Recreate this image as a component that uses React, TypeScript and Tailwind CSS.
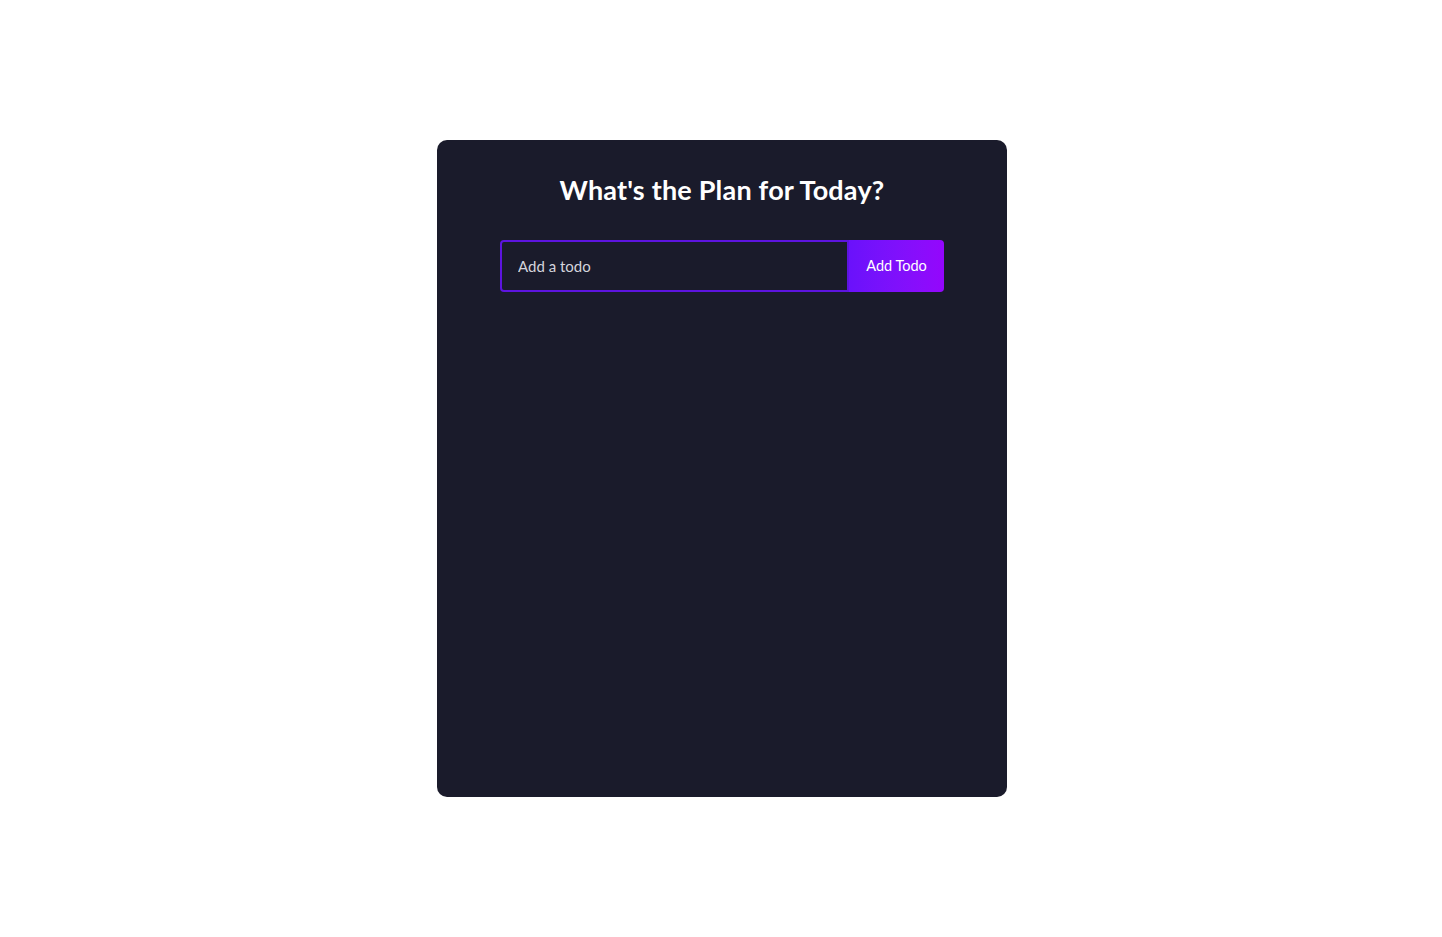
export default function App() {
  return (
    <div className="min-h-screen bg-white flex items-center justify-center" style={{ fontFamily: '"Trebuchet MS", Lato, "Open Sans", sans-serif' }}>
      <div className="ml-[2px] w-[570px] h-[657px] bg-[#1a1b2b] rounded-[10px] pt-[32px] flex flex-col items-center">
        <h1 className="text-[27px] leading-[36px] font-bold text-white tracking-[0.2px]">What's the Plan for Today?</h1>

        {/* form */}
        <form className="mt-[32px] flex w-[444px]" onSubmit={(e) => e.preventDefault()}>
          <input
            type="text"
            placeholder="Add a todo"
            className="w-[349px] h-[52px] bg-transparent border-2 border-[#5d14df] rounded-l-[4px] px-[16px] text-[15px] text-white placeholder:text-[#d4d4dc] outline-none"
          />
          <button
            type="submit"
            className="w-[95px] h-[52px] rounded-r-[4px] text-[14.5px] text-white bg-gradient-to-r from-[#6a11fb] to-[#9406fc]"
          >
            Add Todo
          </button>
        </form>
      </div>
    </div>
  );
}
